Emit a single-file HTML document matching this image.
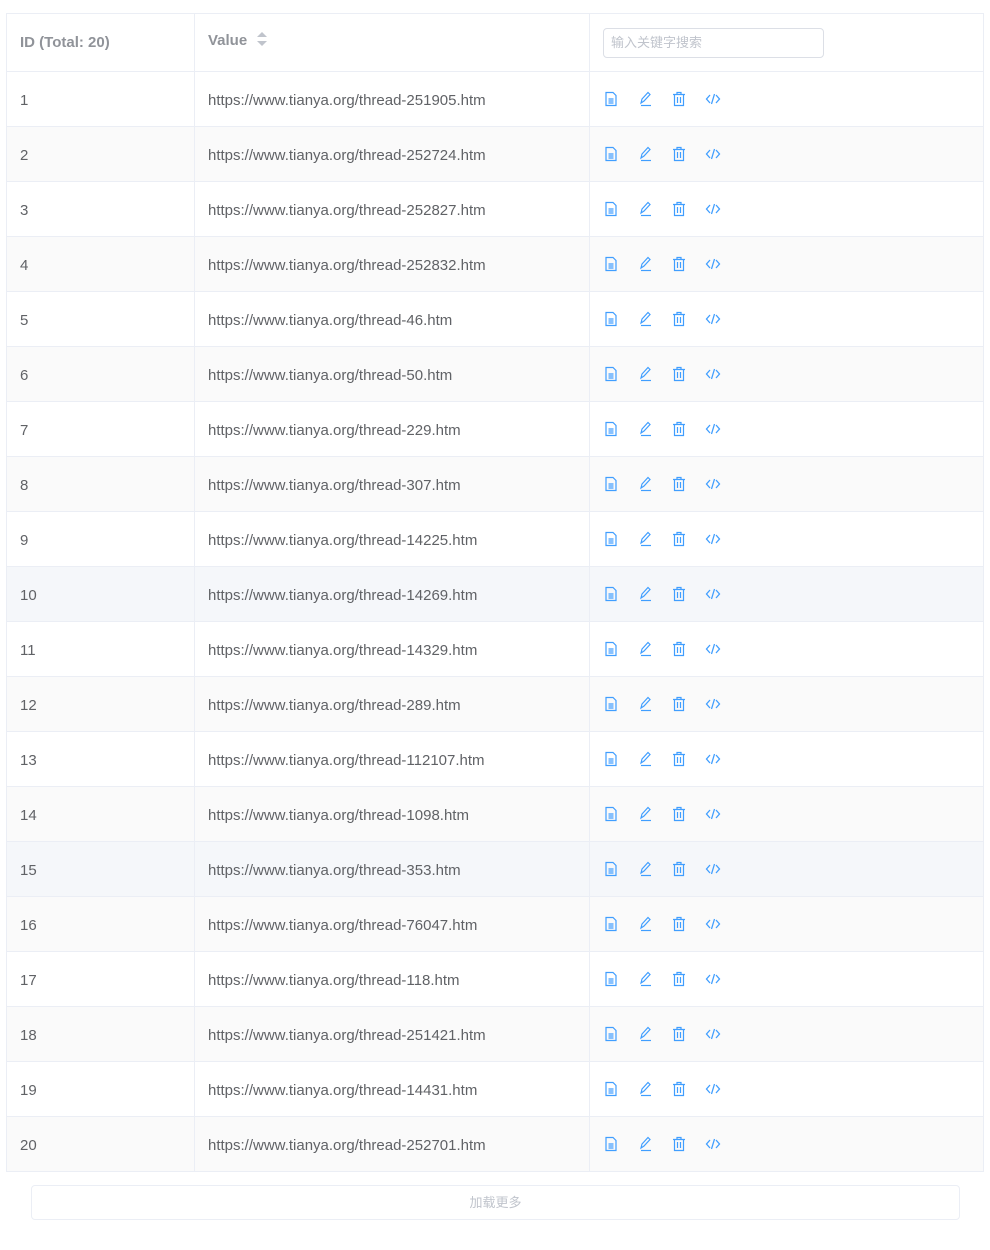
<!DOCTYPE html>
<html><head><meta charset="utf-8"><style>
body{margin:0;background:#fff;font-family:"Liberation Sans","Noto Sans CJK SC",sans-serif;}
table{position:absolute;left:6px;top:13px;border-collapse:collapse;width:978px;table-layout:fixed;}
td,th{border:1px solid #ebeef5;padding:0 0 0 13px;font-size:15px;color:#606266;text-align:left;line-height:20px}
td{padding-top:3px;height:51px}
th{height:57px;color:#909399;font-weight:bold;font-size:15px}
tr:nth-child(even) td{background:#fafafa}
tr.h td{background:#f5f7fa}
.ic{display:flex;gap:18px;align-items:center;position:relative;top:-2px}
.ic svg{width:16px;height:16px}
.inp{width:221px;height:30px;border:1px solid #dcdfe6;border-radius:4px;box-sizing:border-box;font-size:13px;color:#c0c4cc;font-weight:normal;line-height:28px;padding-left:7px}
.btn{position:absolute;left:31px;top:1185px;width:929px;height:35px;border:1px solid #ebeef5;border-radius:4px;box-sizing:border-box;text-align:center;line-height:33px;font-size:13px;color:#c0c4cc}
</style></head><body>
<table>
<colgroup><col style="width:188px"><col style="width:395px"><col></colgroup>
<tr><th>ID (Total: 20)</th><th><span style="position:relative;top:-2px">Value <svg width="14" height="18" viewBox="0 0 14 18" style="vertical-align:-3px;margin-left:4px"><path d="M7 2L12 7H2z" fill="#c0c4cc"/><path d="M7 16L12 11H2z" fill="#c0c4cc"/></svg></span></th><th><div class="inp">输入关键字搜索</div></th></tr>
</table>
<div class="btn">加载更多</div>
<script>
var ids=[251905,252724,252827,252832,46,50,229,307,14225,14269,14329,289,112107,1098,353,76047,118,251421,14431,252701];
var ic='<div class="ic"><svg viewBox="0 0 16 16" fill="none" stroke="#409eff" stroke-width="1.2"><path d="M3 1.5h7l3 3v10H3z"/><path d="M5.5 8h5M5.5 10h5M5.5 12h5"/></svg><svg viewBox="0 0 16 16" fill="none" stroke="#409eff" stroke-width="1.2"><path d="M4 12l1-4 6-6.5 2 2L7 10z"/><path d="M4 14.5h10"/></svg><svg viewBox="0 0 16 16" fill="none" stroke="#409eff" stroke-width="1.2"><path d="M2 3.5h12M6 3.5V1.5h4v2M3.5 3.5v11h9v-11M6.5 6v6M9.5 6v6"/></svg><svg viewBox="0 0 16 16" fill="none" stroke="#409eff" stroke-width="1.3"><path d="M5 4L1.5 8 5 12M11 4l3.5 4-3.5 4M9.5 3l-3 10"/></svg></div>';
var t=document.querySelector('table'),h='';
ids.forEach(function(v,i){h+='<tr'+((i==9||i==14)?' class="h"':'')+'><td>'+(i+1)+'</td><td>https://www.tianya.org/thread-'+v+'.htm</td><td>'+ic+'</td></tr>';});
t.insertAdjacentHTML('beforeend',h);
</script>
</body></html>
